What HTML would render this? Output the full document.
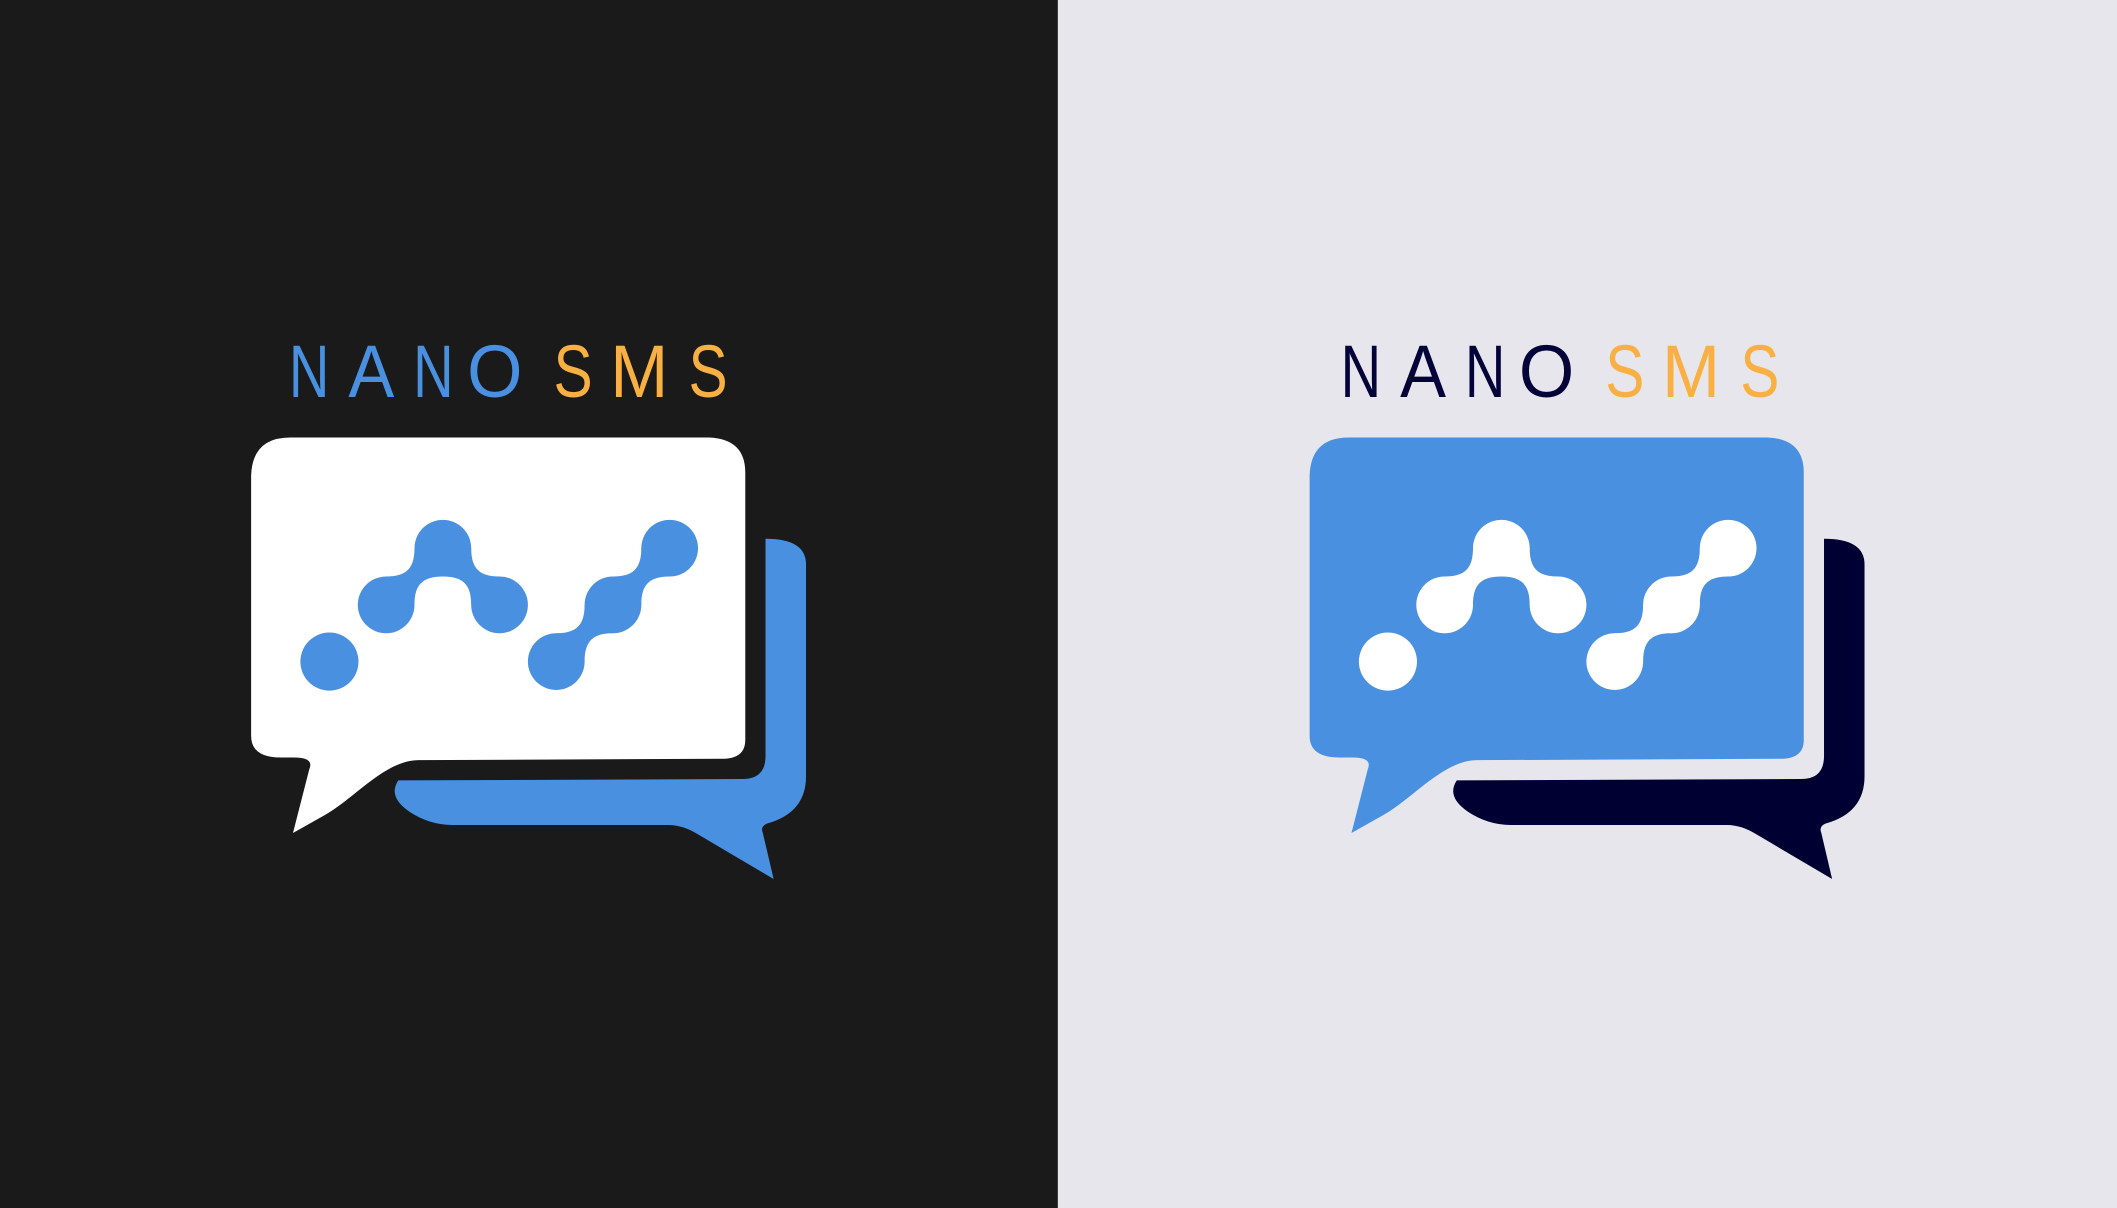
<!DOCTYPE html>
<html><head><meta charset="utf-8"><style>
html,body{margin:0;padding:0;width:2117px;height:1208px;overflow:hidden;background:#1a1a1a}
svg{display:block}
</style></head><body>
<svg width="2117" height="1208" viewBox="0 0 1568 894.7" preserveAspectRatio="none" xmlns="http://www.w3.org/2000/svg">
<defs>
<g id="sym">
  <path d="M286 427 C301 427 307 421 307 406 L328 406 L328 427 C313 427 307 433 307 448 L286 448 Z"/>
  <path d="M328 406 L349 406 C349 421 355 427 370 427 L370 448 L349 448 C349 433 343 427 328 427 Z"/>
  <path d="M412 469 C427 469 433 463 433 448 L454 448 L454 469 C439 469 433 475 433 490 L412 490 Z"/>
  <path d="M454 427 C469 427 475 421 475 406 L496 406 L496 427 C481 427 475 433 475 448 L454 448 Z"/>
  <circle cx="244" cy="490" r="21.5"/>
  <circle cx="286" cy="448" r="21"/>
  <circle cx="328" cy="406" r="21"/>
  <circle cx="370" cy="448" r="21"/>
  <circle cx="412" cy="490" r="21"/>
  <circle cx="454" cy="448" r="21"/>
  <circle cx="496" cy="406" r="21"/>
</g>
</defs>
<rect x="0" y="0" width="783.5" height="895" fill="#1a1a1a"/>
<rect x="783.5" y="0" width="785" height="895" fill="#e7e6ec"/>

<!-- LEFT -->
<g>
  <path d="M567 399 Q597 399 597 418 L597 575 Q597 602 568 610 Q563 612 565 617 L573 651 L517 618 Q506 611 495 611 L335 611 Q318 611 303 601 Q287 590 295 578 L550 577 Q567 577 567 560 Z" fill="#4a90e0"/>
  <path d="M186 352 Q187 324 215 324 L525 324 Q552 325 552 350 L552 548 Q552 562 535 562 L310 563 C285 563 262 592 240 604 L217 617 L229 570 Q233 561 218 561 L208 561 Q186 561 186 545 Z" fill="#ffffff"/>
  <use href="#sym" fill="#4a90e0"/>
  <g font-family="Liberation Sans, sans-serif" font-size="55">
    <text x="214" y="294" textLength="30" lengthAdjust="spacingAndGlyphs" fill="#4a90e0">N</text>
    <text x="258" y="294" textLength="34" lengthAdjust="spacingAndGlyphs" fill="#4a90e0">A</text>
    <text x="306" y="294" textLength="30" lengthAdjust="spacingAndGlyphs" fill="#4a90e0">N</text>
    <text x="346" y="294" textLength="41" lengthAdjust="spacingAndGlyphs" fill="#4a90e0">O</text>
    <text x="410" y="294" textLength="29" lengthAdjust="spacingAndGlyphs" fill="#f9b042">S</text>
    <text x="452" y="294" textLength="43" lengthAdjust="spacingAndGlyphs" fill="#f9b042">M</text>
    <text x="510" y="294" textLength="29" lengthAdjust="spacingAndGlyphs" fill="#f9b042">S</text>
  </g>
</g>

<!-- RIGHT -->
<g transform="translate(784,0)">
  <path d="M567 399 Q597 399 597 418 L597 575 Q597 602 568 610 Q563 612 565 617 L573 651 L517 618 Q506 611 495 611 L335 611 Q318 611 303 601 Q287 590 295 578 L550 577 Q567 577 567 560 Z" fill="#000033"/>
  <path d="M186 352 Q187 324 215 324 L525 324 Q552 325 552 350 L552 548 Q552 562 535 562 L310 563 C285 563 262 592 240 604 L217 617 L229 570 Q233 561 218 561 L208 561 Q186 561 186 545 Z" fill="#4a90e0"/>
  <use href="#sym" fill="#ffffff"/>
</g>
<g font-family="Liberation Sans, sans-serif" font-size="55" transform="translate(779,0)">
  <text x="214" y="294" textLength="30" lengthAdjust="spacingAndGlyphs" fill="#03033a">N</text>
  <text x="258" y="294" textLength="34" lengthAdjust="spacingAndGlyphs" fill="#03033a">A</text>
  <text x="306" y="294" textLength="30" lengthAdjust="spacingAndGlyphs" fill="#03033a">N</text>
  <text x="346" y="294" textLength="41" lengthAdjust="spacingAndGlyphs" fill="#03033a">O</text>
  <text x="410" y="294" textLength="29" lengthAdjust="spacingAndGlyphs" fill="#f9b042">S</text>
  <text x="452" y="294" textLength="43" lengthAdjust="spacingAndGlyphs" fill="#f9b042">M</text>
  <text x="510" y="294" textLength="29" lengthAdjust="spacingAndGlyphs" fill="#f9b042">S</text>
</g>
</svg>
</body></html>
